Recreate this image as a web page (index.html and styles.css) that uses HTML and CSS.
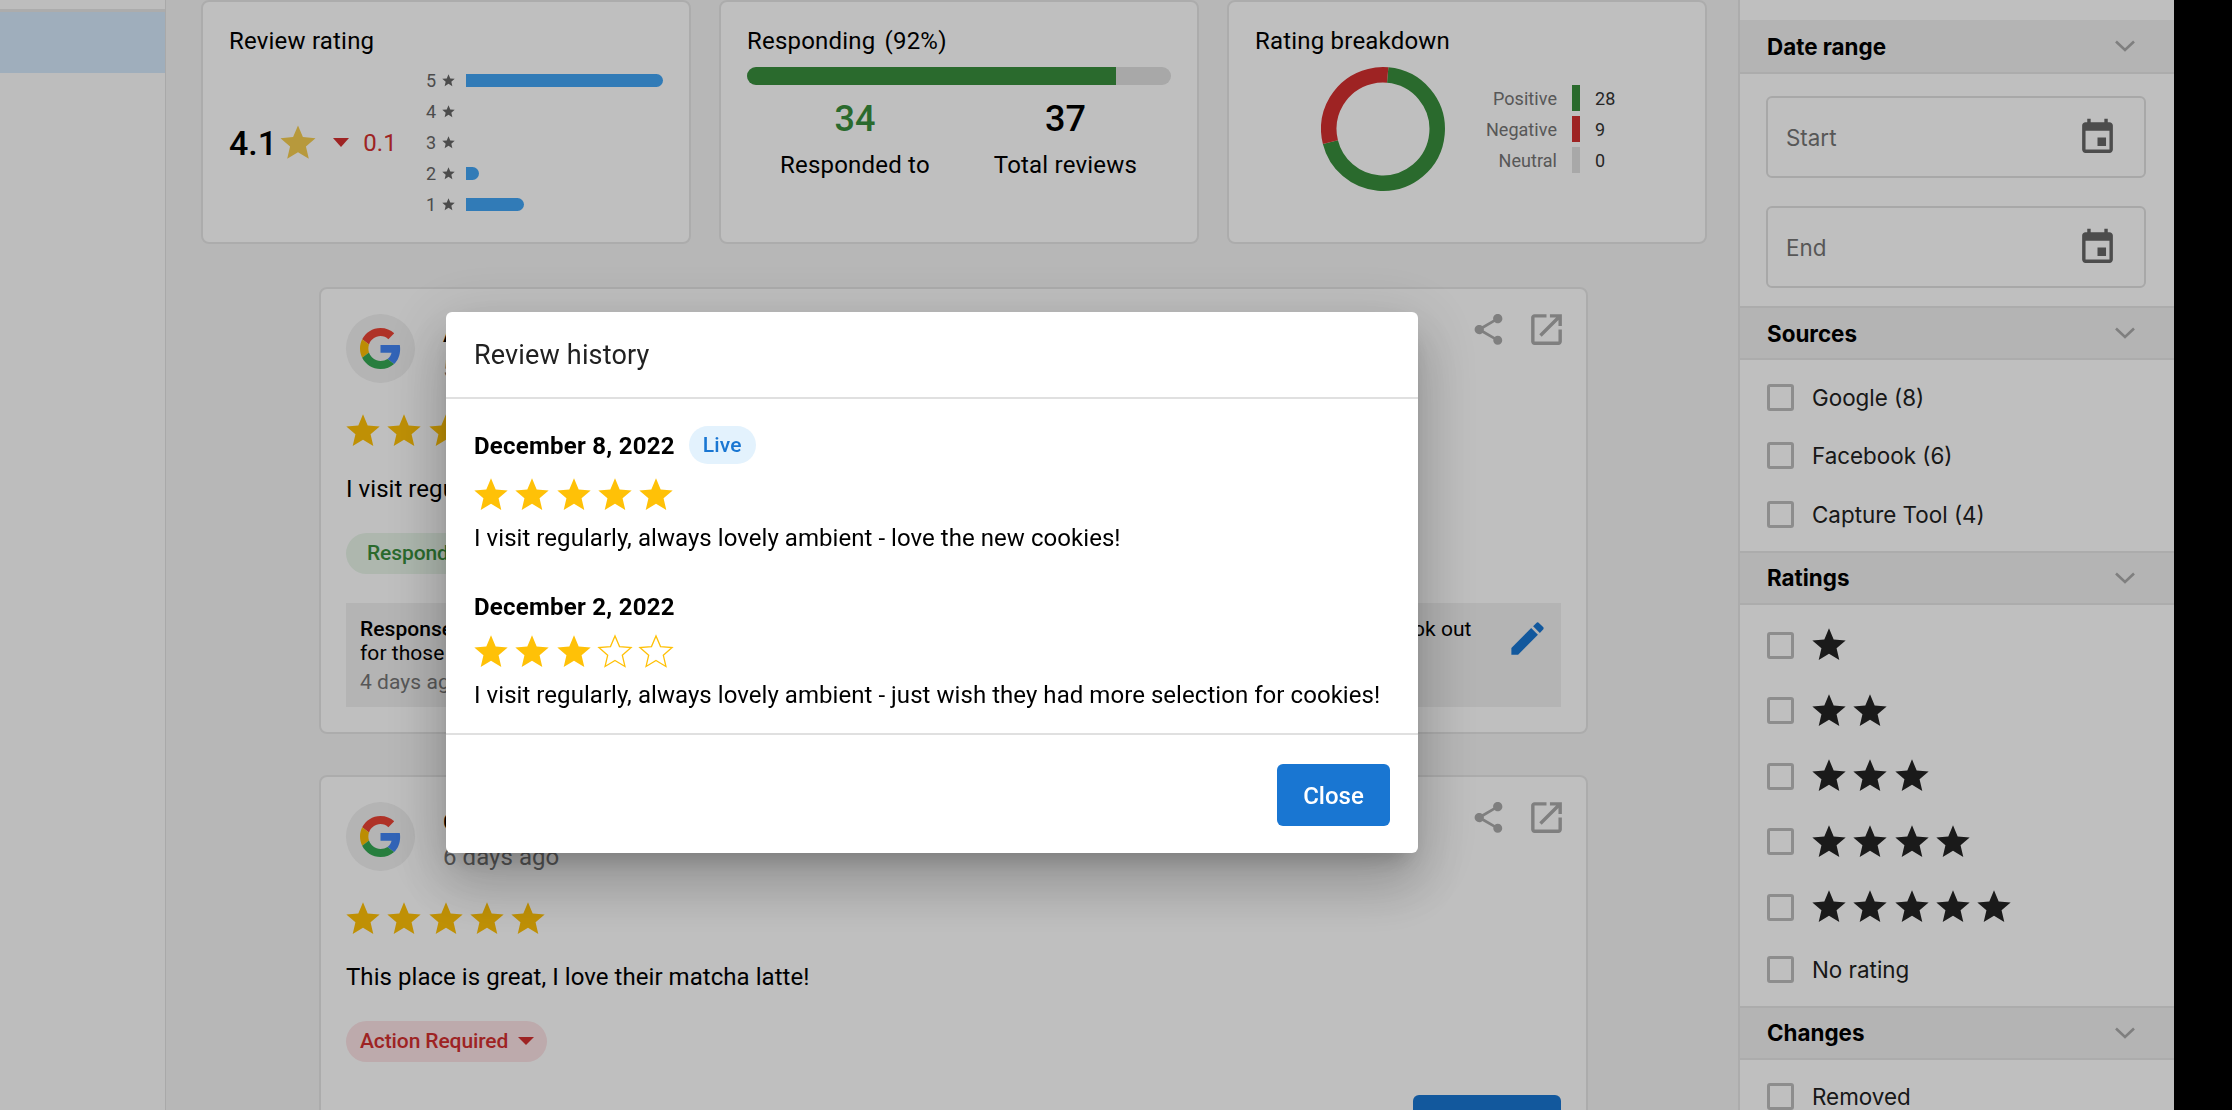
FILE: index.html
```html
<!DOCTYPE html>
<html lang="en">
<head>
    <meta charset="UTF-8">
    <title>Reviews</title>
    <link rel="stylesheet" href="styles.css">
</head>
<body>
    <!-- icon sprites -->
    <svg class="sprites" width="0" height="0">
        <symbol id="i-star" viewBox="0 0 24 24"><path d="M12 17.27 18.18 21l-1.64-7.03L22 9.24l-7.19-.61L12 2 9.19 8.63 2 9.24l5.46 4.73L5.82 21z"/></symbol>
        <symbol id="i-share" viewBox="0 0 24 24"><path d="M18 16.08c-.76 0-1.44.3-1.96.77L8.91 12.7c.05-.23.09-.46.09-.7s-.04-.47-.09-.7l7.05-4.11c.54.5 1.25.81 2.04.81 1.66 0 3-1.34 3-3s-1.34-3-3-3-3 1.34-3 3c0 .24.04.47.09.7L8.04 9.81C7.5 9.31 6.79 9 6 9c-1.66 0-3 1.34-3 3s1.34 3 3 3c.79 0 1.5-.31 2.04-.81l7.12 4.16c-.05.21-.08.43-.08.65 0 1.61 1.31 2.92 2.92 2.92 1.61 0 2.92-1.31 2.92-2.92s-1.31-2.92-2.92-2.92z"/></symbol>
        <symbol id="i-open" viewBox="0 0 24 24"><path d="M19 19H5V5h7V3H5c-1.11 0-2 .9-2 2v14c0 1.1.89 2 2 2h14c1.1 0 2-.9 2-2v-7h-2v7zM14 3v2h3.59l-9.83 9.83 1.41 1.41L19 6.41V10h2V3h-7z"/></symbol>
        <symbol id="i-edit" viewBox="0 0 24 24"><path d="M3 17.25V21h3.75L17.81 9.94l-3.75-3.75L3 17.25zM20.71 7.04c.39-.39.39-1.02 0-1.41l-2.34-2.34c-.39-.39-1.02-.39-1.41 0l-1.83 1.83 3.75 3.75 1.83-1.83z"/></symbol>
        <symbol id="i-event" viewBox="0 0 24 24"><path d="M17 12h-5v5h5v-5zM16 1v2H8V1H6v2H5c-1.11 0-1.99.9-1.99 2L3 19c0 1.1.89 2 2 2h14c1.1 0 2-.9 2-2V5c0-1.1-.9-2-2-2h-1V1h-2zm3 18H5V8h14v11z"/></symbol>
        <symbol id="i-chevron" viewBox="0 0 20 12"><path d="M1 1.5l9 8.5 9-8.5" fill="none" stroke="currentColor" stroke-width="2.6"/></symbol>
        <symbol id="i-google" viewBox="0 0 48 48">
            <path fill="#EA4335" d="M24 9.5c3.54 0 6.71 1.22 9.21 3.6l6.85-6.85C35.9 2.38 30.47 0 24 0 14.62 0 6.51 5.38 2.56 13.22l7.98 6.19C12.43 13.72 17.74 9.5 24 9.5z"/>
            <path fill="#4285F4" d="M46.98 24.55c0-1.57-.15-3.09-.38-4.55H24v9.02h12.94c-.58 2.96-2.26 5.48-4.78 7.18l7.73 6c4.51-4.18 7.09-10.36 7.09-17.65z"/>
            <path fill="#FBBC05" d="M10.53 28.59c-.48-1.45-.76-2.99-.76-4.59s.27-3.14.76-4.59l-7.98-6.19C.92 16.46 0 20.12 0 24c0 3.88.92 7.54 2.56 10.78l7.97-6.19z"/>
            <path fill="#34A853" d="M24 48c6.48 0 11.93-2.13 15.89-5.81l-7.73-6c-2.15 1.45-4.92 2.3-8.16 2.3-6.26 0-11.57-4.22-13.47-9.91l-7.98 6.19C6.51 42.62 14.62 48 24 48z"/>
        </symbol>
    </svg>

    <!-- left nav -->
    <nav class="nav">
        <div class="nav-line"></div>
        <div class="nav-active"></div>
    </nav>

    <main class="main">
        <!-- summary cards -->
        <section class="summary">
            <div class="summary-card">
                <h2 class="summary-title">Review rating</h2>
                <div class="rating-body">
                    <div class="rating-score">
                        <span class="score-value">4.1</span>
                        <svg class="score-star"><use href="#i-star"/></svg>
                        <span class="score-caret"></span>
                        <span class="score-change">0.1</span>
                    </div>
                    <div class="rating-bars">
                        <div class="rating-row"><span class="rating-digit">5</span><svg class="rating-star"><use href="#i-star"/></svg><span class="rating-bar" style="width: 197px"></span></div>
                        <div class="rating-row"><span class="rating-digit">4</span><svg class="rating-star"><use href="#i-star"/></svg></div>
                        <div class="rating-row"><span class="rating-digit">3</span><svg class="rating-star"><use href="#i-star"/></svg></div>
                        <div class="rating-row"><span class="rating-digit">2</span><svg class="rating-star"><use href="#i-star"/></svg><span class="rating-bar" style="width: 13px"></span></div>
                        <div class="rating-row"><span class="rating-digit">1</span><svg class="rating-star"><use href="#i-star"/></svg><span class="rating-bar" style="width: 58px"></span></div>
                    </div>
                </div>
            </div>

            <div class="summary-card">
                <h2 class="summary-title">Responding <span class="title-note">(92%)</span></h2>
                <div class="progress"><div class="progress-fill" style="width: 87.1%"></div></div>
                <div class="stats">
                    <div class="stat">
                        <div class="stat-value stat-green">34</div>
                        <div class="stat-label">Responded to</div>
                    </div>
                    <div class="stat">
                        <div class="stat-value">37</div>
                        <div class="stat-label">Total reviews</div>
                    </div>
                </div>
            </div>

            <div class="summary-card">
                <h2 class="summary-title">Rating breakdown</h2>
                <div class="breakdown">
                    <svg class="donut" viewBox="0 0 124 124">
                        <circle class="donut-green" cx="62" cy="62" r="54.2" pathLength="360" stroke-dasharray="251 109" transform="rotate(-85 62 62)"/>
                        <circle class="donut-red" cx="62" cy="62" r="54.2" pathLength="360" stroke-dasharray="109 251" transform="rotate(166 62 62)"/>
                    </svg>
                    <div class="legend">
                        <span class="legend-label">Positive</span><span class="legend-bar legend-green"></span><span class="legend-value">28</span>
                        <span class="legend-label">Negative</span><span class="legend-bar legend-red"></span><span class="legend-value">9</span>
                        <span class="legend-label">Neutral</span><span class="legend-bar legend-grey"></span><span class="legend-value">0</span>
                    </div>
                </div>
            </div>
        </section>

        <!-- review list -->
        <section class="feed">
            <article class="review">
                <header class="review-head">
                    <div class="source-logo"><svg class="google-mark"><use href="#i-google"/></svg></div>
                    <div class="reviewer">
                        <div class="reviewer-name">Alex Morgan</div>
                        <div class="reviewer-date">5 days ago</div>
                    </div>
                    <svg class="icon-share"><use href="#i-share"/></svg>
                    <svg class="icon-open"><use href="#i-open"/></svg>
                </header>
                <div class="stars review-stars">
                    <svg class="star"><use href="#i-star"/></svg>
                    <svg class="star"><use href="#i-star"/></svg>
                    <svg class="star"><use href="#i-star"/></svg>
                    <svg class="star"><use href="#i-star"/></svg>
                    <svg class="star"><use href="#i-star"/></svg>
                </div>
                <p class="review-text">I visit regularly, always lovely ambient - love the new cookies!</p>
                <div class="chip chip-green">Responded <span class="chip-caret"></span></div>
                <div class="response">
                    <div class="response-body">
                        <div class="response-text"><b>Response:</b> Thanks so much for visiting, we are glad you enjoy the ambient! New batches come out every week, look out<br>for those next time.</div>
                        <div class="response-date">4 days ago</div>
                    </div>
                    <svg class="icon-edit"><use href="#i-edit"/></svg>
                </div>
            </article>

            <article class="review">
                <header class="review-head">
                    <div class="source-logo"><svg class="google-mark"><use href="#i-google"/></svg></div>
                    <div class="reviewer">
                        <div class="reviewer-name">Chris Bennett</div>
                        <div class="reviewer-date">6 days ago</div>
                    </div>
                    <svg class="icon-share"><use href="#i-share"/></svg>
                    <svg class="icon-open"><use href="#i-open"/></svg>
                </header>
                <div class="stars review-stars">
                    <svg class="star"><use href="#i-star"/></svg>
                    <svg class="star"><use href="#i-star"/></svg>
                    <svg class="star"><use href="#i-star"/></svg>
                    <svg class="star"><use href="#i-star"/></svg>
                    <svg class="star"><use href="#i-star"/></svg>
                </div>
                <p class="review-text">This place is great, I love their matcha latte!</p>
                <div class="chip chip-red">Action Required <span class="chip-caret"></span></div>
                <div class="review-actions"><button class="respond-button" aria-label="Respond"></button></div>
            </article>
        </section>
    </main>

    <!-- filters -->
    <aside class="filters">
        <div class="filter-head filter-head-first"><span>Date range</span><svg class="chevron"><use href="#i-chevron"/></svg></div>
        <div class="date-fields">
            <div class="date-field"><span>Start</span><svg class="icon-event"><use href="#i-event"/></svg></div>
            <div class="date-field"><span>End</span><svg class="icon-event"><use href="#i-event"/></svg></div>
        </div>

        <div class="filter-head"><span>Sources</span><svg class="chevron"><use href="#i-chevron"/></svg></div>
        <div class="filter-list">
            <label class="check-row"><span class="checkbox"></span>Google (8)</label>
            <label class="check-row"><span class="checkbox"></span>Facebook (6)</label>
            <label class="check-row"><span class="checkbox"></span>Capture Tool (4)</label>
        </div>

        <div class="filter-head"><span>Ratings</span><svg class="chevron"><use href="#i-chevron"/></svg></div>
        <div class="filter-list">
            <div class="check-row star-row"><span class="checkbox"></span><div class="stars dark-stars">
                <svg class="star"><use href="#i-star"/></svg>
            </div></div>
            <div class="check-row star-row"><span class="checkbox"></span><div class="stars dark-stars">
                <svg class="star"><use href="#i-star"/></svg>
                <svg class="star"><use href="#i-star"/></svg>
            </div></div>
            <div class="check-row star-row"><span class="checkbox"></span><div class="stars dark-stars">
                <svg class="star"><use href="#i-star"/></svg>
                <svg class="star"><use href="#i-star"/></svg>
                <svg class="star"><use href="#i-star"/></svg>
            </div></div>
            <div class="check-row star-row"><span class="checkbox"></span><div class="stars dark-stars">
                <svg class="star"><use href="#i-star"/></svg>
                <svg class="star"><use href="#i-star"/></svg>
                <svg class="star"><use href="#i-star"/></svg>
                <svg class="star"><use href="#i-star"/></svg>
            </div></div>
            <div class="check-row star-row"><span class="checkbox"></span><div class="stars dark-stars">
                <svg class="star"><use href="#i-star"/></svg>
                <svg class="star"><use href="#i-star"/></svg>
                <svg class="star"><use href="#i-star"/></svg>
                <svg class="star"><use href="#i-star"/></svg>
                <svg class="star"><use href="#i-star"/></svg>
            </div></div>
            <label class="check-row"><span class="checkbox"></span>No rating</label>
        </div>

        <div class="filter-head"><span>Changes</span><svg class="chevron"><use href="#i-chevron"/></svg></div>
        <div class="filter-list">
            <label class="check-row"><span class="checkbox"></span>Removed</label>
        </div>
    </aside>

    <div class="black-edge"></div>

    <!-- modal -->
    <div class="backdrop"></div>
    <div class="modal">
        <div class="modal-head">Review history</div>
        <div class="modal-body">
            <div class="history-date history-date-live">December 8, 2022 <span class="live-pill">Live</span></div>
            <div class="stars history-stars">
                <svg class="star"><use href="#i-star"/></svg>
                <svg class="star"><use href="#i-star"/></svg>
                <svg class="star"><use href="#i-star"/></svg>
                <svg class="star"><use href="#i-star"/></svg>
                <svg class="star"><use href="#i-star"/></svg>
            </div>
            <p class="history-text">I visit regularly, always lovely ambient - love the new cookies!</p>

            <div class="history-date history-date-old">December 2, 2022</div>
            <div class="stars history-stars">
                <svg class="star"><use href="#i-star"/></svg>
                <svg class="star"><use href="#i-star"/></svg>
                <svg class="star"><use href="#i-star"/></svg>
                <svg class="star star-empty"><use href="#i-star"/></svg>
                <svg class="star star-empty"><use href="#i-star"/></svg>
            </div>
            <p class="history-text">I visit regularly, always lovely ambient - just wish they had more selection for cookies!</p>
        </div>
        <div class="modal-foot">
            <button class="close-button">Close</button>
        </div>
    </div>
</body>
</html>
```

FILE: styles.css
```css
* {
    margin: 0;
    padding: 0;
    box-sizing: border-box;
}

body {
    display: flex;
    height: 100vh;
    overflow: hidden;
    background: #f5f5f5;
    color: #000;
    font-family: Roboto, "Liberation Sans", sans-serif;
    font-size: 24px;
    letter-spacing: 0.05px;
}

.sprites {
    position: absolute;
}

svg {
    display: block;
    flex: none;
}

/* left nav */
.nav {
    flex: none;
    width: 166px;
    padding-top: 9px;
    background: #fcfcfc;
    border-right: 1px solid #e2e2e2;
}

.nav-line {
    height: 3px;
    background: #e6e6e6;
}

.nav-active {
    height: 61px;
    background: #d4e9fb;
}

/* main column */
.main {
    flex: 1;
    min-width: 0;
    padding: 0 29px 0 35px;
}

.summary {
    display: grid;
    grid-template-columns: 490px 480px 480px;
    gap: 28px;
}

.summary-card {
    height: 244px;
    padding: 24px 26px 0;
    background: #fff;
    border: 2px solid #e6e6e6;
    border-radius: 8px;
}

.summary-title {
    font-size: 24px;
    font-weight: 400;
    line-height: 30px;
    letter-spacing: 0.2px;
}

.title-note {
    margin-left: 3px;
}

.rating-body {
    display: flex;
    align-items: center;
    margin-top: 9px;
}

.rating-score {
    display: flex;
    align-items: center;
    width: 197px;
}

.score-value {
    font-size: 34px;
    font-weight: 500;
}

.score-star {
    width: 42px;
    height: 42px;
    fill: #f5cd50;
}

.score-caret {
    width: 0;
    height: 0;
    margin-left: 14px;
    border-left: 8px solid transparent;
    border-right: 8px solid transparent;
    border-top: 9px solid #d32f2f;
}

.score-change {
    margin-left: 14px;
    color: #d32f2f;
}

.rating-row {
    display: flex;
    align-items: center;
    height: 31px;
}

.rating-digit {
    width: 15px;
    font-size: 18px;
    color: #666;
}

.rating-star {
    width: 15px;
    height: 15px;
    margin-right: 10px;
    fill: #666;
}

.rating-bar {
    height: 13px;
    background: #42a5f5;
    border-radius: 0 7px 7px 0;
}

.progress {
    height: 18px;
    margin-top: 11px;
    background: #e0e0e0;
    border-radius: 9px;
    overflow: hidden;
}

.progress-fill {
    height: 100%;
    background: #388e3c;
}

.stats {
    display: flex;
    gap: 64px;
    padding-left: 33px;
    margin-top: 14px;
}

.stat {
    text-align: center;
}

.stat-value {
    font-size: 36px;
    font-weight: 500;
    line-height: 40px;
}

.stat-green {
    color: #388e3c;
}

.stat-label {
    margin-top: 11px;
    line-height: 30px;
    letter-spacing: 0.2px;
}

.breakdown {
    display: flex;
    align-items: flex-start;
    margin-top: 11px;
    padding-left: 66px;
}

.donut {
    width: 124px;
    height: 124px;
}

.donut circle {
    fill: none;
    stroke-width: 15.5;
}

.donut-green {
    stroke: #388e3c;
}

.donut-red {
    stroke: #d32f2f;
}

.legend {
    display: grid;
    grid-template-columns: 90px 8px auto;
    grid-auto-rows: 26px;
    column-gap: 15px;
    row-gap: 5px;
    align-items: center;
    margin: 18px 0 0 22px;
    font-size: 18px;
}

.legend-label {
    text-align: right;
    color: #757575;
}

.legend-bar {
    height: 26px;
}

.legend-green {
    background: #388e3c;
}

.legend-red {
    background: #d32f2f;
}

.legend-grey {
    background: #e0e0e0;
}

.legend-value {
    color: #333;
}

/* reviews */
.feed {
    display: flex;
    flex-direction: column;
    gap: 41px;
    width: 1269px;
    margin: 43px 0 0 118px;
}

.review {
    flex: none;
    padding: 25px;
    background: #fff;
    border: 2px solid #e6e6e6;
    border-radius: 8px;
}

.review-head {
    display: flex;
    align-items: flex-start;
}

.source-logo {
    display: flex;
    align-items: center;
    justify-content: center;
    width: 69px;
    height: 69px;
    background: #f0f0f0;
    border-radius: 50%;
}

.google-mark {
    width: 41px;
    height: 41px;
}

.reviewer {
    flex: 1;
    margin-left: 28px;
}

.reviewer-name {
    font-weight: 500;
    line-height: 40px;
}

.reviewer-date {
    color: #757575;
    line-height: 30px;
}

.icon-share {
    width: 37px;
    height: 37px;
    margin-top: -3px;
    fill: #aaa;
}

.icon-open {
    width: 41px;
    height: 41px;
    margin: -5px -6px 0 19px;
    fill: #aaa;
}

.stars {
    display: flex;
    gap: 1.33px;
}

.star {
    width: 40px;
    height: 40px;
    fill: #ffc107;
}

.star-empty {
    fill: #fff;
    stroke: #ffc107;
    stroke-width: 0.8;
    transform: scale(0.965);
}

.review-stars {
    margin: 27px 0 0 -3px;
}

.review-text {
    margin-top: 22px;
    line-height: 32px;
}

.chip {
    display: flex;
    align-items: center;
    height: 41px;
    margin-top: 28px;
    padding-bottom: 2px;
    border-radius: 21px;
    font-size: 21px;
    font-weight: 500;
    letter-spacing: -0.1px;
}

.chip-green {
    width: 250px;
    padding-left: 21px;
    background: #e8f5e9;
    color: #388e3c;
}

.chip-red {
    width: 201px;
    padding-left: 14px;
    background: #fde3e6;
    color: #d32f2f;
}

.chip-caret {
    width: 0;
    height: 0;
    margin-left: 10px;
    border-left: 8px solid transparent;
    border-right: 8px solid transparent;
    border-top: 8px solid currentColor;
}

.response {
    display: flex;
    justify-content: space-between;
    align-items: flex-start;
    height: 104px;
    margin-top: 29px;
    padding: 14px 12px 0 14px;
    background: #f0f0f0;
    font-size: 21px;
}

.response-text {
    line-height: 24px;
    white-space: nowrap;
}

.response-text b {
    font-weight: 500;
}

.response-date {
    margin-top: 4px;
    line-height: 26px;
    color: #757575;
}

.icon-edit {
    width: 43px;
    height: 43px;
    fill: #1976d2;
}

.review-actions {
    display: flex;
    justify-content: flex-end;
    margin-top: 33px;
}

.respond-button {
    width: 148px;
    height: 62px;
    background: #1976d2;
    border: none;
    border-radius: 6px;
}

/* right filters */
.filters {
    flex: none;
    width: 436px;
    background: #fff;
    border-left: 2px solid #e6e6e6;
    font-family: Inter, "Liberation Sans", sans-serif;
    font-size: 22.4px;
    letter-spacing: 0;
    overflow: hidden;
}

.filter-head {
    display: flex;
    align-items: center;
    justify-content: space-between;
    height: 54px;
    padding: 0 39px 0 27px;
    background: #f0f0f0;
    border-top: 2px solid #e6e6e6;
    border-bottom: 2px solid #e6e6e6;
    font-weight: 700;
}

.filter-head-first {
    margin-top: 20px;
    border-top: 0;
}

.chevron {
    width: 20px;
    height: 12px;
    color: #aaa;
}

.date-fields {
    display: flex;
    flex-direction: column;
    gap: 28px;
    padding: 22px 28px 18px 26px;
}

.date-field {
    display: flex;
    align-items: center;
    justify-content: space-between;
    height: 82px;
    padding: 0 26px 0 18px;
    border: 2px solid #e0e0e0;
    border-radius: 6px;
    color: #757575;
}

.icon-event {
    width: 41px;
    height: 41px;
    fill: #666;
}

.filter-list {
    padding: 8px 27px 7px;
    color: #212121;
}

.check-row {
    display: flex;
    align-items: center;
    gap: 18px;
    height: 58.5px;
}

.star-row {
    height: 65.5px;
}

.checkbox {
    flex: none;
    width: 27px;
    height: 27px;
    border: 3px solid #bdbdbd;
    border-radius: 3px;
}

.dark-stars {
    margin-left: -3px;
}

.dark-stars .star {
    fill: #232323;
}

.black-edge {
    flex: none;
    width: 58px;
    background: #000;
    position: relative;
    z-index: 3;
}

/* modal */
.backdrop {
    position: fixed;
    inset: 0;
    background: rgba(0, 0, 0, 0.25);
    z-index: 1;
}

.modal {
    position: fixed;
    left: 446px;
    top: 312px;
    width: 972px;
    height: 541px;
    background: #fff;
    border-radius: 6px;
    box-shadow: 0 15px 21px -10px rgba(0, 0, 0, 0.2), 0 34px 53px 4px rgba(0, 0, 0, 0.14), 0 13px 64px 11px rgba(0, 0, 0, 0.12);
    z-index: 2;
}

.modal-head {
    display: flex;
    align-items: center;
    height: 87px;
    padding: 0 28px;
    border-bottom: 2px solid #e0e0e0;
    font-size: 27px;
    letter-spacing: 0.16px;
    color: #212121;
}

.modal-body {
    height: 336px;
    padding: 27px 28px 0;
    border-bottom: 2px solid #e0e0e0;
}

.history-date {
    display: flex;
    align-items: center;
    gap: 14px;
    font-weight: 700;
    letter-spacing: 0.25px;
}

.history-date-live {
    height: 40px;
}

.history-date-old {
    height: 32px;
    margin-top: 37px;
}

.live-pill {
    display: flex;
    align-items: center;
    justify-content: center;
    width: 67px;
    height: 38px;
    margin-top: -2px;
    background: #e3f2fd;
    border-radius: 19px;
    color: #1976d2;
    font-size: 21px;
    font-weight: 500;
}

.history-stars {
    margin: 9px 0 0 -3px;
}

.history-text {
    margin-top: 7px;
    line-height: 32px;
}

.modal-foot {
    display: flex;
    justify-content: flex-end;
    padding: 29px 28px 0;
}

.close-button {
    width: 113px;
    height: 62px;
    padding-top: 1px;
    background: #1976d2;
    border: none;
    border-radius: 6px;
    color: #fff;
    font: 500 24px Roboto, sans-serif;
}
```
